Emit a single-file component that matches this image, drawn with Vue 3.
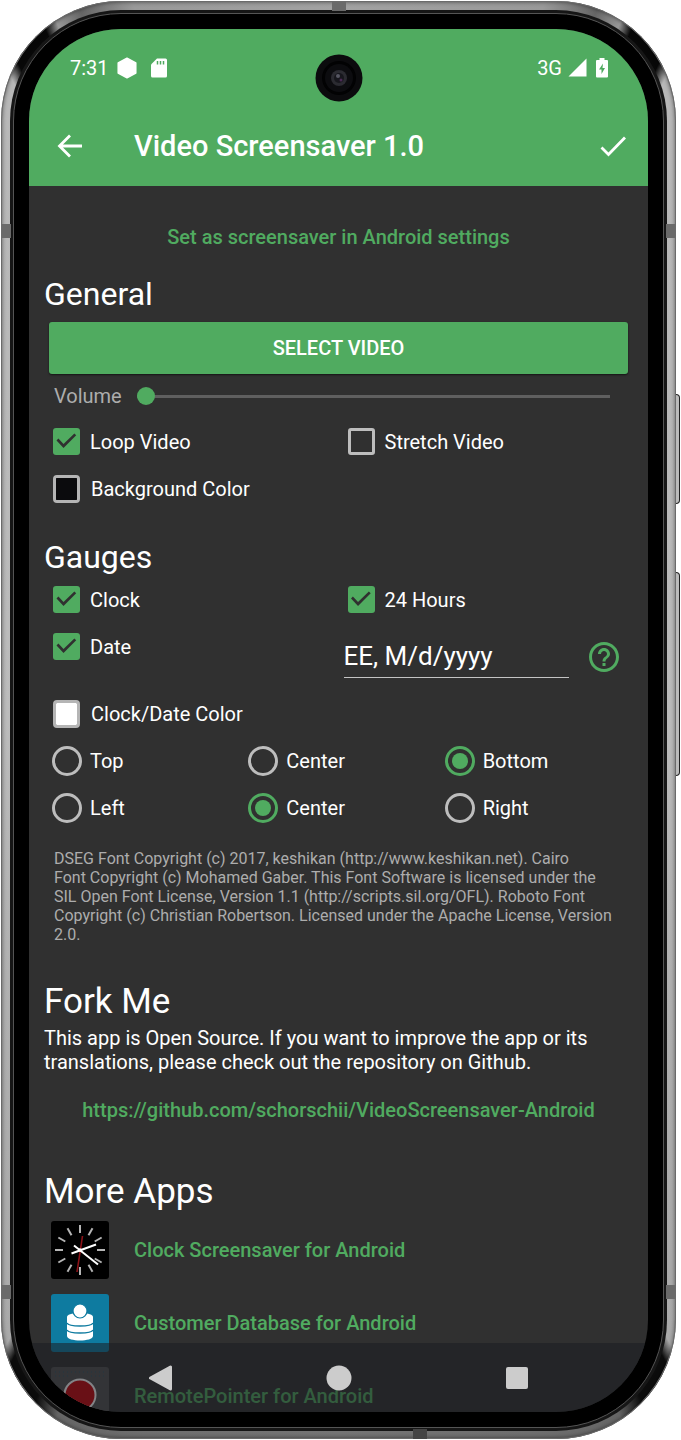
<template>
  <div class="phone">
    <span class="band band--top"></span>
    <span class="band band--bottom"></span>
    <span class="band band--left band--high"></span>
    <span class="band band--right band--high"></span>
    <span class="band band--left band--low"></span>
    <span class="band band--right band--low"></span>
    <span class="key key--power"></span>
    <span class="key key--volume"></span>

    <div class="bezel">
      <div class="screen">
        <svg class="camera" viewBox="0 0 48 48" aria-hidden="true">
          <circle cx="24" cy="24" r="23.5" fill="#0b0b0d" />
          <circle cx="24" cy="24" r="17" fill="#020203" />
          <circle cx="24" cy="24" r="14" fill="#0c0c0f" />
          <circle cx="24" cy="24" r="8" fill="#2b2b31" />
          <circle cx="24" cy="24" r="5" fill="#17171d" />
          <circle cx="23" cy="22" r="2" fill="#575763" />
          <circle cx="26" cy="26" r="1.5" fill="#4b2a56" />
        </svg>

        <header class="header">
          <div class="status">
            <span class="status__time">7:31</span>
            <svg class="status__hex" viewBox="0 0 20 22" aria-hidden="true">
              <path d="M10 1.2 18.8 6v10L10 20.8 1.2 16V6z" fill="#fff" stroke="#fff" stroke-width="1.5" stroke-linejoin="round" />
            </svg>
            <svg class="status__card" viewBox="0 0 16 20" aria-hidden="true">
              <path d="M6 .5h8.500a1.500 1.500 0 0 1 1.500 1.500v16a1.500 1.500 0 0 1-1.500 1.500h-13A1.500 1.500 0 0 1 0 18V6.500z" fill="#fff" />
              <path d="M6.500 3v3.500M9.500 3v3.500M12.500 3v3.500" stroke="#4fa95f" stroke-width="1.500" />
            </svg>
            <span class="status__net">3G</span>
            <svg class="status__signal" viewBox="0 0 19 19" aria-hidden="true">
              <path d="M18.500.5v18H.5z" fill="#fff" />
            </svg>
            <svg class="status__battery" viewBox="0 0 12 20" aria-hidden="true">
              <path d="M3.500 0h5v2H11a1 1 0 0 1 1 1v15.500a1 1 0 0 1-1 1H1a1 1 0 0 1-1-1V3a1 1 0 0 1 1-1h2.500z" fill="#fff" />
              <path d="M7 5.500 3 11.500h2.500v4.500L9 10H6.500z" fill="#4fa95f" />
            </svg>
          </div>
          <div class="bar">
            <button class="bar__btn" type="button" aria-label="Back">
              <svg viewBox="0 0 26 26"><path d="M25 13H3M13 2.500 2.500 13 13 23.500" fill="none" stroke="#fff" stroke-width="2.800" /></svg>
            </button>
            <h1 class="bar__title">Video Screensaver 1.0</h1>
            <button class="bar__btn" type="button" aria-label="Done">
              <svg viewBox="0 0 26 26"><path d="M1.500 14.500 8.500 21.500 25 4.500" fill="none" stroke="#fff" stroke-width="2.800" /></svg>
            </button>
          </div>
        </header>

        <main class="content">
          <a href="#" class="link">Set as screensaver in Android settings</a>

          <section class="section">
            <h2 class="section__title section__title--small">General</h2>
            <button class="select" type="button">SELECT VIDEO</button>
            <div class="volume">
              <label for="volume">Volume</label>
              <input id="volume" v-model="volume" class="volume__range" type="range" min="0" max="100" />
            </div>
            <div class="row">
              <label class="option"><input v-model="loop" class="check" type="checkbox" />Loop Video</label>
              <label class="option"><input v-model="stretch" class="check" type="checkbox" />Stretch Video</label>
            </div>
            <div class="row">
              <label class="option"><input v-model="background" class="swatch" type="color" />Background Color</label>
            </div>
          </section>

          <section class="section">
            <h2 class="section__title section__title--small">Gauges</h2>
            <div class="row">
              <label class="option"><input v-model="clock" class="check" type="checkbox" />Clock</label>
              <label class="option"><input v-model="hours24" class="check" type="checkbox" />24 Hours</label>
            </div>
            <div class="row row--format">
              <label class="option"><input v-model="date" class="check" type="checkbox" />Date</label>
              <div class="format">
                <input v-model="format" class="format__input" type="text" aria-label="Date format" />
                <button class="format__help" type="button" aria-label="Help">
                  <svg viewBox="2 2 20 20" fill="#50ab60">
                    <path d="M11 18h2v-2h-2v2zm1-16C6.480 2 2 6.480 2 12s4.480 10 10 10 10-4.480 10-10S17.520 2 12 2zm0 18c-4.410 0-8-3.590-8-8s3.590-8 8-8 8 3.590 8 8-3.590 8-8 8zm0-14c-2.210 0-4 1.790-4 4h2c0-1.100.9-2 2-2s2 .9 2 2c0 2-3 1.750-3 5h2c0-2.250 3-2.500 3-5 0-2.210-1.790-4-4-4z" />
                  </svg>
                </button>
              </div>
            </div>
            <div class="row">
              <label class="option"><input v-model="clockColor" class="swatch" type="color" />Clock/Date Color</label>
            </div>
            <div class="row">
              <label v-for="v in vertical" :key="v" class="option">
                <input v-model="alignY" class="radio" type="radio" name="align-y" :value="v" />{{ v }}
              </label>
            </div>
            <div class="row">
              <label v-for="h in horizontal" :key="h" class="option">
                <input v-model="alignX" class="radio" type="radio" name="align-x" :value="h" />{{ h }}
              </label>
            </div>
            <p class="license">
              DSEG Font Copyright (c) 2017, keshikan (http://www.keshikan.net). Cairo<br />Font Copyright (c) Mohamed Gaber. This Font Software is licensed under the SIL Open Font License, Version 1.1 (http://scripts.sil.org/OFL). Roboto Font Copyright (c) Christian Robertson. Licensed under the Apache License, Version 2.0.
            </p>
          </section>

          <section class="section">
            <h2 class="section__title">Fork Me</h2>
            <p class="text">This app is Open Source. If you want to improve the app or its translations, please check out the repository on Github.</p>
            <a href="#" class="link link--repo">https://github.com/schorschii/VideoScreensaver-Android</a>
          </section>

          <section class="section">
            <h2 class="section__title">More Apps</h2>
            <ul class="apps">
              <li>
                <a href="#" class="app">
                  <svg class="app__icon" viewBox="0 0 58 58" aria-hidden="true">
                    <rect width="58" height="58" rx="3" fill="#000" />
                    <g stroke="#b5b5b5" stroke-width="2">
                      <path v-for="n in 12" :key="n" d="M29 4v8" :transform="`rotate(${n * 30} 29 29)`" />
                    </g>
                    <path d="M31.500 15 26 51" stroke="#8e1218" stroke-width="1.600" />
                    <path d="M20.500 32.500 45 23.500" stroke="#fff" stroke-width="2" />
                    <path d="M23 24.500 47 43.500" stroke="#fff" stroke-width="2" />
                    <circle cx="29" cy="29" r="1.800" fill="#fff" />
                  </svg>
                  Clock Screensaver for Android
                </a>
              </li>
              <li>
                <a href="#" class="app">
                  <svg class="app__icon" viewBox="0 0 58 58" aria-hidden="true">
                    <rect width="58" height="58" rx="3" fill="#0e7ba0" />
                    <path d="M16 23c0-2 4-4 13-4s13 2 13 4v19c0 6-26 6-26 0z" fill="#fff" />
                    <path d="M16 29c2 4 24 4 26 0M16 36c2 4 24 4 26 0" fill="none" stroke="#0e7ba0" stroke-width="1.500" />
                    <circle cx="29" cy="17" r="7" fill="#fff" stroke="#0e7ba0" stroke-width="1.200" />
                  </svg>
                  Customer Database for Android
                </a>
              </li>
              <li>
                <a href="#" class="app">
                  <svg class="app__icon" viewBox="0 0 58 58" aria-hidden="true">
                    <rect width="58" height="58" rx="3" fill="#505050" />
                    <path d="M4 5h50M4 9h14M40 9h14" stroke="#2a5566" stroke-width="1" stroke-dasharray="1 3" />
                    <circle cx="29" cy="28" r="15.500" fill="#c80008" stroke="#fff" stroke-width="2" />
                  </svg>
                  RemotePointer for Android
                </a>
              </li>
            </ul>
          </section>
        </main>

        <nav class="nav">
          <button type="button" aria-label="Back">
            <svg viewBox="0 0 26 26"><path d="M22.500 2v22L2.500 13z" fill="#ccc" stroke="#ccc" stroke-width="3" stroke-linejoin="round" /></svg>
          </button>
          <button type="button" aria-label="Home">
            <svg viewBox="0 0 26 26"><circle cx="13" cy="13" r="12.500" fill="#ccc" /></svg>
          </button>
          <button type="button" aria-label="Overview">
            <svg viewBox="0 0 26 26"><rect x="2" y="2" width="22" height="22" rx="2" fill="#ccc" /></svg>
          </button>
        </nav>
      </div>
    </div>
  </div>
</template>

<script setup>
import { ref } from 'vue'

const vertical = ['Top', 'Center', 'Bottom']
const horizontal = ['Left', 'Center', 'Right']

const volume = ref(0)
const loop = ref(true)
const stretch = ref(false)
const background = ref('#0b0b0d')
const clock = ref(true)
const hours24 = ref(true)
const date = ref(true)
const format = ref('EE, M/d/yyyy')
const clockColor = ref('#ffffff')
const alignY = ref('Bottom')
const alignX = ref('Center')
</script>

<style>
body {
  margin: 0;
  background: #fff;
}
</style>

<style scoped>
* {
  box-sizing: border-box;
}

/* --- Phone body --- */
.phone {
  position: relative;
  display: flex;
  height: calc(100vh - 2px);
  margin: 1px 5px 1px 1px;
  padding: 12px 12px 11px;
  border-radius: 120px;
  background: conic-gradient(
    #a2a2a2 0deg, #999 16deg, #666 20deg, #999 22deg, #080808 23deg, #080808 26deg, #b8b8b8 27deg,
    #bcbcbc 90deg, #aaa 152deg, #0c0c0c 153deg, #0c0c0c 156deg, #666 158deg, #6e6e6e 165deg,
    #747474 180deg, #6e6e6e 195deg, #666 202deg, #0c0c0c 204deg, #0c0c0c 207deg, #aaa 208deg,
    #bcbcbc 270deg, #b8b8b8 333deg, #080808 334deg, #080808 337deg, #999 338deg, #666 340deg, #999 344deg, #a2a2a2 360deg
  );
  box-shadow: inset 0 0 0 1px #6b6b6b, inset 0 0 4px 1px rgba(0, 0, 0, 0.5);
  font-family: Roboto, "Liberation Sans", sans-serif;
  font-size: 20px;
  color: #fff;
}

.bezel {
  flex: 1;
  min-width: 0;
  display: flex;
  padding: 15px;
  border: 1px solid #555;
  border-radius: 108px;
  background: #000;
  box-shadow: 0 0 0 3px #161616;
}

.screen {
  position: relative;
  flex: 1;
  min-width: 0;
  overflow: hidden;
  border-radius: 92px;
  background: #303030;
}

.band {
  position: absolute;
  background: #6a6a6a;
}

.band--top,
.band--bottom {
  width: 14px;
  height: 10px;
}

.band--top {
  top: 0;
  left: 49%;
}

.band--bottom {
  bottom: 0;
  left: 61%;
  background: #444;
}

.band--left,
.band--right {
  width: 10px;
  height: 14px;
}

.band--left {
  left: 0;
}

.band--right {
  right: 0;
}

.band--high {
  top: 223px;
}

.band--low {
  bottom: 140px;
}

.key {
  position: absolute;
  left: 100%;
  width: 4px;
  border: 1px solid #222;
  border-left: 0;
  border-radius: 0 4px 4px 0;
  background: #bbb;
}

.key--power {
  top: 393px;
  height: 110px;
}

.key--volume {
  top: 571px;
  height: 204px;
}

.camera {
  position: absolute;
  top: 25px;
  left: 50%;
  width: 48px;
  height: 48px;
  transform: translateX(-50%);
}

/* --- Header --- */
.header {
  background: #50ab60;
}

.status {
  display: flex;
  align-items: center;
  height: 77px;
  padding: 0 40px 0 41px;
}

.status__hex {
  width: 20px;
  height: 22px;
  margin-left: 8px;
}

.status__card {
  width: 16px;
  height: 20px;
  margin-left: 14px;
}

.status__net {
  margin-left: auto;
}

.status__signal {
  width: 19px;
  height: 19px;
  margin-left: 6px;
}

.status__battery {
  width: 12px;
  height: 20px;
  margin-left: 9px;
}

.bar {
  display: flex;
  align-items: center;
  height: 80px;
  padding: 0 22px 0 28px;
}

.bar__btn {
  width: 26px;
  height: 26px;
  padding: 0;
  border: 0;
  background: none;
}

.bar__btn svg,
.nav svg,
.format__help svg {
  display: block;
  width: 100%;
  height: 100%;
}

.bar__title {
  flex: 1;
  margin: 0 0 0 51px;
  font-size: 29px;
  font-weight: 500;
}

/* --- Content --- */
.content {
  padding: 39px 15px 0;
}

.link {
  display: block;
  line-height: 24px;
  font-weight: 500;
  color: #50ab60;
  text-align: center;
  text-decoration: none;
}

.link--repo {
  margin: 24px 0 51px;
}

.section {
  margin-top: 26px;
}

.section__title {
  margin: 0;
  font-size: 35px;
  font-weight: 400;
  line-height: 38px;
}

.section__title--small {
  font-size: 32px;
}

.select {
  display: block;
  width: calc(100% - 10px);
  height: 52px;
  margin: 9px 5px 0;
  border: 0;
  border-radius: 3px;
  background: #50ab60;
  box-shadow: 0 1px 2px rgba(0, 0, 0, 0.6);
  font-family: inherit;
  font-size: 20px;
  font-weight: 500;
  color: #fff;
}

.volume {
  display: flex;
  align-items: center;
  gap: 15px;
  height: 44px;
  padding: 0 23px 0 10px;
  color: #adadad;
}

.volume__range {
  flex: 1;
  height: 18px;
  margin: 0;
  appearance: none;
  background: linear-gradient(#5f5f5f, #5f5f5f) center / 100% 3px no-repeat;
}

.volume__range::-webkit-slider-thumb {
  appearance: none;
  width: 18px;
  height: 18px;
  border-radius: 50%;
  background: #50ab60;
}

.row {
  display: flex;
}

.option {
  flex: 1;
  display: flex;
  align-items: center;
  gap: 8px;
  height: 47px;
  padding-left: 8px;
}

.check,
.radio {
  display: grid;
  place-items: center;
  appearance: none;
  border: 3px solid #bdbdbd;
}

.check {
  width: 27px;
  height: 27px;
  margin: 0 2px 0 1px;
  border-radius: 3px;
}

.check:checked {
  border: 0;
  background: #50ab60;
}

.check:checked::after {
  content: "";
  width: 27px;
  height: 27px;
  background: #303030;
  clip-path: polygon(13% 46%, 20% 39%, 39% 59%, 79% 20%, 86% 27%, 39% 74%);
}

.radio {
  width: 30px;
  height: 30px;
  margin: 0;
  border-radius: 50%;
}

.radio:checked {
  border-color: #50ab60;
}

.radio:checked::after {
  content: "";
  width: 16px;
  height: 16px;
  border-radius: 50%;
  background: #50ab60;
}

.swatch {
  appearance: none;
  width: 27px;
  height: 28px;
  margin: 0 3px 0 1px;
  padding: 0;
  border: 3px solid #b5b5b5;
  border-radius: 4px;
  background: none;
}

.swatch::-webkit-color-swatch-wrapper {
  padding: 0;
}

.swatch::-webkit-color-swatch {
  border: 0;
  border-radius: 0;
}

.row--format {
  height: 67px;
}

.row--format .option {
  min-width: 50%;
}

.format {
  flex: 1;
  min-width: 0;
  display: flex;
  align-items: center;
  gap: 20px;
  margin-left: 5px;
  padding-right: 14px;
}

.format__input {
  flex: 1;
  min-width: 0;
  height: 42px;
  padding: 0;
  border: 0;
  border-bottom: 1px solid #c4c4c4;
  background: none;
  font-family: inherit;
  font-size: 26px;
  color: #fff;
}

.format__help {
  width: 30px;
  height: 30px;
  padding: 0;
  border: 0;
  background: none;
}

.license {
  margin: 18px 20px 39px 10px;
  font-size: 16px;
  line-height: 19px;
  color: #adadad;
}

.text {
  margin: 5px 0 0;
  line-height: 24px;
}

.apps {
  display: flex;
  flex-direction: column;
  gap: 15px;
  margin: 10px 0 0;
  padding: 0 0 0 7px;
  list-style: none;
}

.app {
  display: flex;
  align-items: center;
  gap: 25px;
  font-weight: 500;
  color: #50ab60;
  text-decoration: none;
}

.app__icon {
  width: 58px;
  height: 58px;
}

/* --- Navigation bar over the scrolled content --- */
.nav {
  position: absolute;
  right: 0;
  bottom: 0;
  left: 0;
  display: flex;
  align-items: center;
  justify-content: center;
  gap: 152px;
  height: 69px;
  background: rgba(28, 30, 35, 0.55);
}

.nav button {
  width: 26px;
  height: 26px;
  padding: 0;
  border: 0;
  background: none;
}
</style>
